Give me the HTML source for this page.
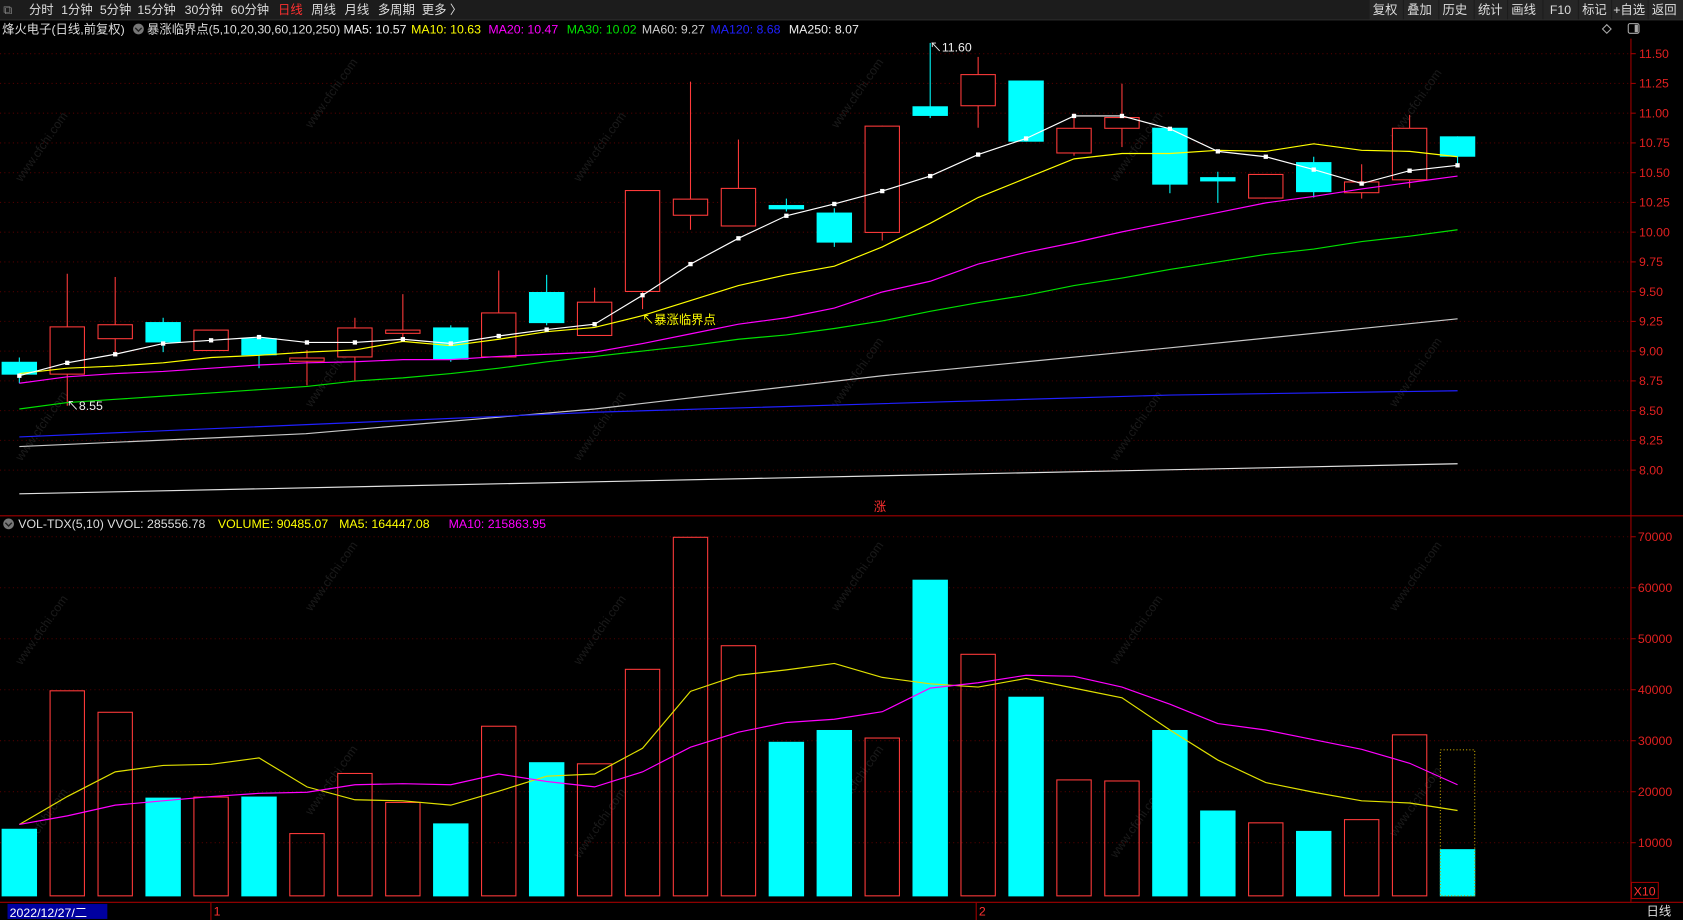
<!DOCTYPE html>
<html><head><meta charset="utf-8">
<style>
html,body{margin:0;padding:0;background:#000;width:1683px;height:920px;overflow:hidden}
svg{display:block}
text{font-family:"Liberation Sans","Noto Sans CJK SC",sans-serif;font-size:11.5px}
</style></head>
<body>
<svg id="s" width="1683" height="920" viewBox="0 0 1568 857" preserveAspectRatio="none" xmlns="http://www.w3.org/2000/svg">
<rect x="0" y="0" width="1568" height="857" fill="#000"/>
<rect x="0" y="0" width="1568" height="18" fill="#1c1c1c"/>
<line x1="0" y1="18.5" x2="1568" y2="18.5" stroke="#333"/>
<g fill="#ddd">
<text x="3" y="13" fill="#888" font-size="10">⧉</text>
<text x="27" y="13">分时</text><text x="57" y="13">1分钟</text><text x="93" y="13">5分钟</text>
<text x="128" y="13">15分钟</text><text x="172" y="13">30分钟</text><text x="215" y="13">60分钟</text>
<text x="259" y="13" fill="#ff3030">日线</text><text x="290" y="13">周线</text><text x="321" y="13">月线</text>
<text x="352" y="13">多周期</text><text x="393" y="13">更多 〉</text>
</g>
<g id="btns"></g>
<g>
<text x="2" y="31" fill="#ddd">烽火电子(日线,前复权)</text>
<circle cx="129" cy="27" r="5" fill="#777"/><path d="M126 26l3 3 3-3" stroke="#222" fill="none" stroke-width="1.3"/>
<text x="137" y="31" fill="#ddd">暴涨临界点(5,10,20,30,60,120,250)</text>
<text x="320" y="31" fill="#eee">MA5: 10.57</text>
<text x="383" y="31" fill="#ffff00">MA10: 10.63</text>
<text x="455" y="31" fill="#ff00ff">MA20: 10.47</text>
<text x="528" y="31" fill="#00e000">MA30: 10.02</text>
<text x="598" y="31" fill="#ccc">MA60: 9.27</text>
<text x="662" y="31" fill="#2020ff">MA120: 8.68</text>
<text x="735" y="31" fill="#eee">MA250: 8.07</text>
</g>
<path d="M1493 27l4-4 4 4-4 4z" stroke="#aaa" fill="none"/>
<rect x="1517" y="22" width="10" height="9" rx="1.5" stroke="#aaa" fill="none"/><rect x="1523" y="23" width="3" height="7" fill="#aaa"/>
<g id="chart"></g>
<line x1="1519.5" y1="36" x2="1519.5" y2="840" stroke="#a00000"/>
<line x1="0" y1="480.5" x2="1568" y2="480.5" stroke="#a00000"/>
<line x1="0" y1="840.5" x2="1568" y2="840.5" stroke="#a00000"/>
<text x="814" y="476" fill="#ff3030">涨</text>
<circle cx="8" cy="488" r="5" fill="#777"/><path d="M5 487l3 3 3-3" stroke="#222" fill="none" stroke-width="1.3"/>
<text x="17" y="492" fill="#ddd">VOL-TDX(5,10) VVOL: 285556.78</text>
<text x="203" y="492" fill="#ffff00">VOLUME: 90485.07</text>
<text x="316" y="492" fill="#ffff00">MA5: 164447.08</text>
<text x="418" y="492" fill="#ff00ff">MA10: 215863.95</text>
<rect x="1520" y="822" width="25" height="15" fill="none" stroke="#a00000"/>
<text x="1522" y="834" fill="#ff3030" font-size="11">X10</text>
<rect x="7" y="842" width="93" height="14" fill="#0000a0"/>
<text x="9" y="854" fill="#fff">2022/12/27/二</text>
<line x1="196.5" y1="841" x2="196.5" y2="857" stroke="#a00000"/>
<text x="199" y="853" fill="#ff3030">1</text>
<line x1="909.5" y1="841" x2="909.5" y2="857" stroke="#a00000"/>
<text x="912" y="853" fill="#ff3030">2</text>
<text x="1534" y="853" fill="#ddd">日线</text>
</svg>
<script>
var NS="http://www.w3.org/2000/svg";
function el(p,t,a,txt){var e=document.createElementNS(NS,t);for(var k in a)e.setAttribute(k,a[k]);if(txt!==undefined)e.textContent=txt;p.appendChild(e);return e;}
var b=document.getElementById('btns');
var names=["复权","叠加","历史","统计","画线","F10","标记","+自选","返回"];
var bx=[1276,1308,1341,1374,1405,1438,1471,1502,1536];
var bw=[31,32,32,30,32,32,30,33,32];
names.forEach(function(n,i){el(b,'rect',{x:bx[i],y:0,width:bw[i],height:18,fill:'#262626'});el(b,'text',{x:bx[i]+(n=="F10"?6:(n=="+自选"?1:3)),y:13,fill:'#ddd'},n);});
var g=document.getElementById('chart');
for(var i=0;i<15;i++){var p=11.5-i*0.25;var y=50+i*27.71;
 el(g,'line',{x1:0,y1:y,x2:1519,y2:y,stroke:'#500000','stroke-dasharray':'1 3'});
 el(g,'line',{x1:1519,y1:y,x2:1524,y2:y,stroke:'#a00000'});
 el(g,'text',{x:1527,y:y+4,fill:'#e02020','font-size':11},p.toFixed(2));}
for(var i=0;i<7;i++){var v=70000-i*10000;var y=500+i*47.5;
 el(g,'line',{x1:0,y1:y,x2:1519,y2:y,stroke:'#500000','stroke-dasharray':'1 3'});
 el(g,'line',{x1:1519,y1:y,x2:1524,y2:y,stroke:'#a00000'});
 el(g,'text',{x:1526,y:y+4,fill:'#e02020','font-size':11},String(v));}
var wm=[[20,170],[290,120],[540,170],[780,120],[1040,170],[1300,130],[20,430],[290,380],[540,430],[780,380],[1040,430],[1300,380],[20,620],[290,570],[540,620],[780,570],[1040,620],[1300,570],[20,800],[290,760],[540,800],[780,760],[1040,800],[1300,780]];
wm.forEach(function(w){el(g,'text',{x:w[0],y:w[1],fill:'#1a1a1a','font-size':20,transform:'rotate(-55 '+w[0]+' '+w[1]+')'},'www.cfchi.com');});
var C=[['c',337,349,333,357],['r',304,349,255,378],['r',302,316,258,330],['c',300,319,296,328],['r',307,327,307,327],['c',315,331,312,343],['r',333,337,326,359],['r',305,333,296,355],['r',307,311,274,315],['c',305,335,303,337],['r',291,333,252,333],['c',272,301,256,303],['r',281,313,268,313],['r',177,272,177,288],['r',185,201,76,214],['r',175,211,130,211],['c',191,195,185,197],['c',198,226,194,230],['r',117,217,117,224],['c',99,108,40,110],['r',69,99,53,119],['c',75,132,75,132],['r',119,143,106,145],['r',109,120,78,137],['c',119,172,119,180],['c',165,169,160,189],['r',162,185,162,185],['c',151,179,146,184],['r',169,180,153,185],['r',119,168,107,175],['c',127,146,127,155]];
var V=[['c',772],['r',643],['r',663],['c',743],['r',742],['c',742],['r',776],['r',720],['r',747],['c',767],['r',676],['c',710],['r',711],['r',623],['r',500],['r',601],['c',691],['c',680],['r',687],['c',540],['r',609],['c',649],['r',726],['r',727],['c',680],['c',755],['r',766],['c',774],['r',763],['r',684],['c',791]];
var W=33;
C.forEach(function(c,i){var x=18+i*44.665;
 var col=c[0]=='c'?'#00ffff':'#ff3a3a';
 el(g,'line',{x1:x,y1:c[3],x2:x,y2:c[4],stroke:col});
 if(c[0]=='c')el(g,'rect',{x:x-W/2,y:c[1],width:W,height:Math.max(1,c[2]-c[1]),fill:col});
 else el(g,'rect',{x:x-W/2+0.5,y:c[1]+0.5,width:W-1,height:Math.max(1,c[2]-c[1]-1),fill:'#000',stroke:col});
 var v=V[i];
 if(v[0]=='c')el(g,'rect',{x:x-W/2,y:v[1],width:W,height:835-v[1],fill:'#00ffff'});
 else el(g,'rect',{x:x-W/2+0.5,y:v[1]+0.5,width:W-1,height:835-v[1]-1,fill:'none',stroke:'#ff3a3a'});
});
el(g,'rect',{x:18+30*44.665-W/2+0.5,y:698.5,width:W-1,height:136,fill:'none',stroke:'#c0a000','stroke-dasharray':'1 2'});
function line(pts,col,dots){var d=pts.map(function(p,i){return (i?'L':'M')+p[0]+' '+p[1];}).join('');el(g,'path',{d:d,stroke:col,fill:'none','stroke-width':1.1});
 if(dots)pts.forEach(function(p){el(g,'rect',{x:p[0]-2,y:p[1]-2,width:4,height:4,fill:col});});}
function ser(a){return a.map(function(y,i){return [18+i*44.665,y];});}
line([[18,416],[285,404],[554,381],[822,350],[1090,324],[1358,297]],'#c8c8c8');
line([[18,407],[554,384],[1090,368],[1358,364]],'#2020ff');
line([[18,460],[1358,432]],'#e0e0e0');
line(ser([381,375,372,369,366,363,360,355,352,348,343,337,332,327,322,316,312,306,299,290,282,275,266,259,251,244,237,232,225,220,214]),'#00e000');
line(ser([357,351,348,346,343,340,338,337,335,335,332,330,328,320,311,302,296,287,272,262,246,235,226,216,207,198,189,183,176,170,164]),'#ff00ff');
line(ser([348,343,341,338,333,331,328,326,318,322,316,309,305,294,280,266,256,248,230,208,184,166,148,143,143,140,141,134,140,141,146]),'#ffff00');
line(ser([350,338,330,320,317,314,319,319,316,320,313,307,302,275,246,222,201,190,178,164,144,129,108,108,120,141,146,158,171,159,154]),'#ffffff',true);
line(ser([768,742,719,713,712,706,733,745,746,750,737,723,721,697,644,629,624,618,631,637,640,632,641,650,680,708,729,738,746,748,755]),'#e0e000');
line(ser([768,760,750,746,742,739,738,731,730,731,721,728,733,719,696,682,673,670,663,641,636,629,630,640,656,674,680,689,698,711,731]),'#ff00ff');
el(g,'text',{x:866,y:48,fill:'#eee','font-size':11},'↖11.60');
el(g,'text',{x:62,y:382,fill:'#eee','font-size':11},'↖8.55');
el(g,'text',{x:598,y:302,fill:'#ffff00','font-size':11.5},'↖暴涨临界点');
</script>
</body></html>
